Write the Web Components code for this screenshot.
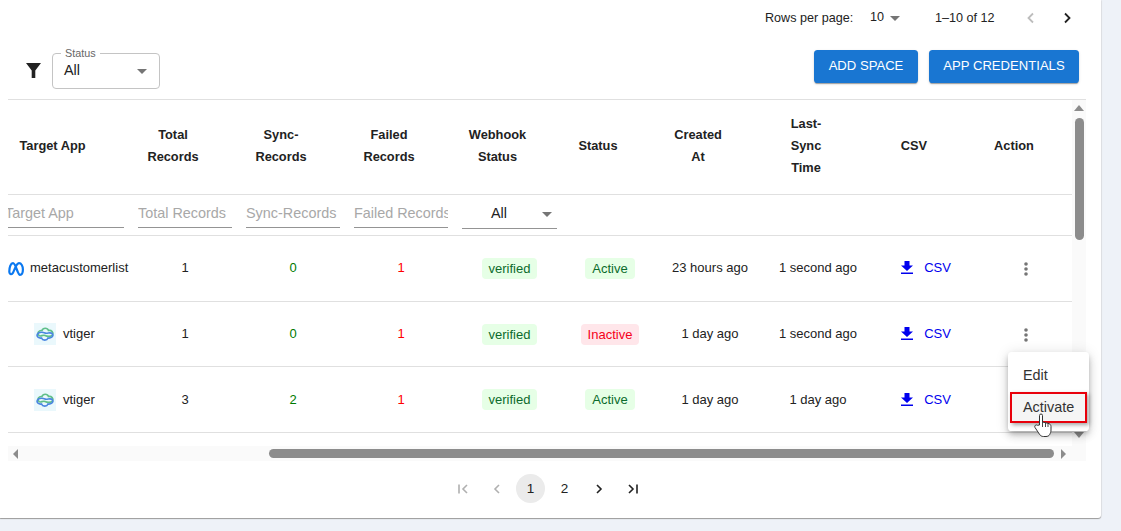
<!DOCTYPE html>
<html>
<head>
<meta charset="utf-8">
<style>
  html, body { margin: 0; height: 100%; }
  body { background: #eef2f8; font-family: "Liberation Sans", Arial, sans-serif; color: #222; overflow: hidden; }
</style>
</head>
<body>
<spaces-page>
  <top-pager slot="pager"></top-pager>
  <spaces-toolbar slot="toolbar"></spaces-toolbar>
  <spaces-table slot="table"></spaces-table>
  <page-nav slot="nav"></page-nav>
</spaces-page>

<script>
const CARET = `<svg width="10" height="5" viewBox="0 0 10 5"><path d="M0 0h10L5 5z" fill="#757575"/></svg>`;

class SpacesPage extends HTMLElement {
  constructor() {
    super();
    this.attachShadow({mode: 'open'}).innerHTML = `
      <style>
        :host { display: flex; flex-direction: column; width: 1101px; height: 518px; background: #fff; box-shadow: 0 1px 1px #9a9a9a, 1px 0 1px #e4e6ea; border-radius: 0 0 3px 0; box-sizing: border-box; }
      </style>
      <slot name="pager"></slot>
      <slot name="toolbar"></slot>
      <slot name="table"></slot>
      <slot name="nav"></slot>`;
  }
}

class TopPager extends HTMLElement {
  constructor() {
    super();
    this.attachShadow({mode: 'open'}).innerHTML = `
      <style>
        :host { display: flex; align-items: center; height: 36px; padding-left: 765px; font-size: 12.6px; color: #222; box-sizing: border-box; }
        .rows { width: 105px; }
        .size { display: flex; align-items: center; width: 65px; }
        .size span { width: 20px; margin-top: -2px; }
        .range { width: 90px; }
        svg.chev { display: block; }
        .next { margin-left: 24px; }
      </style>
      <span class="rows">Rows per page:</span>
      <div class="size"><span>10</span>${CARET}</div>
      <span class="range">1–10 of 12</span>
      <svg class="chev" width="12" height="12" viewBox="0 0 12 12"><path d="M8 1.5 3.5 6 8 10.500" fill="none" stroke="#bdbdbd" stroke-width="1.800"/></svg>
      <svg class="chev next" width="12" height="12" viewBox="0 0 12 12"><path d="M4 1.500 8.500 6 4 10.500" fill="none" stroke="#222" stroke-width="1.800"/></svg>`;
  }
}

class SpacesToolbar extends HTMLElement {
  constructor() {
    super();
    this.attachShadow({mode: 'open'}).innerHTML = `
      <style>
        :host { display: flex; align-items: flex-start; height: 63px; padding: 14px 22px 0 26px; box-sizing: border-box; }
        .funnel { display: block; margin-top: 13px; margin-right: 11px; }
        .select { position: relative; display: flex; align-items: center; justify-content: space-between; width: 108px; height: 36px; margin-top: 3px; padding: 0 12px 0 11px; border: 1px solid #c4c4c4; border-radius: 4px; box-sizing: border-box; font-size: 14.4px; color: #222; }
        .select span { margin-bottom: 2px; }
        .select label { position: absolute; left: 8px; top: -7px; padding: 0 4px; background: #fff; font-size: 10.800px; line-height: 12px; color: #666; }
        .spacer { flex: 1; }
        button { height: 33px; padding: 0 0 3px; margin-left: 11px; border: 0; border-radius: 3.600px; background: #1976d2; color: #fff; font: 13.1px "Liberation Sans", Arial, sans-serif; box-shadow: 0 2px 1px -1px rgba(0,0,0,.2), 0 1px 1px rgba(0,0,0,.14), 0 1px 3px rgba(0,0,0,.12); }
        .add { width: 104px; }
        .creds { width: 150px; }
      </style>
      <svg class="funnel" width="15" height="15" viewBox="0 0 15 15"><path d="M0 0h15L9.300 7.400V15H5.700V7.400z" fill="#222"/></svg>
      <div class="select"><label>Status</label><span>All</span>${CARET}</div>
      <div class="spacer"></div>
      <button class="add">ADD SPACE</button>
      <button class="creds">APP CREDENTIALS</button>`;
  }
}

const COLS = '131px 108px 108px 108px 109px 92px 108px 108px 108px 92px';

const ROWS = [
  {app: 'metacustomerlist', meta: true, total: 1, sync: 0, failed: 1, on: true, created: '23 hours ago', last: '1 second ago'},
  {app: 'vtiger', total: 1, sync: 0, failed: 1, on: false, created: '1 day ago', last: '1 second ago'},
  {app: 'vtiger', total: 3, sync: 2, failed: 1, on: true, created: '1 day ago', last: '1 day ago'},
];

const META_ICON = `<svg width="16" height="14" viewBox="0 0 16 14"><path d="M1.300 9.500C1.300 5 2.800 1.200 5 1.200 7.800 1.200 9.500 12.800 12 12.800 14 12.800 14.900 10 14.900 7.500 14.900 3.800 13.200 1.200 11 1.200 8.300 1.200 6.500 8 5 10.800 4 12.800 1.500 13 1.300 9.500z" fill="none" stroke="#0a78f0" stroke-width="2.200"/></svg>`;

const TIGER_ICON = `<svg width="22" height="22" viewBox="0 0 22 22"><rect width="22" height="22" fill="#eaf8fc"/><path d="M5 12.500C2.500 10 5 7 8 7.500 9 4.500 13.500 4.500 14.500 7.500 17.500 7 20 9.500 18.500 12 17 14 13 13.500 11 12.500 9 11.500 6.500 14 5 12.500z" fill="none" stroke="#5fbf8a" stroke-width="1.600"/><path d="M3.500 11C5 8.500 9 9 11 10 13 11 17 8.500 18.500 11 20 13.500 16.500 15.500 14 15 13 17.800 8.500 17.800 7.500 15 5 15.500 2 13.500 3.500 11z" fill="none" stroke="#4a86e0" stroke-width="1.600"/></svg>`;

class StatusBadge extends HTMLElement {
  constructor() {
    super();
    this.attachShadow({mode: 'open'}).innerHTML = `
      <style>
        :host { display: inline-block; padding: 3px 7px; border-radius: 4px; font-size: 13px; line-height: 15px; background: #e6ffe6; color: #0c6b2c; }
        :host([tone="bad"]) { background: #ffe6ea; color: #f5001a; }
      </style><slot></slot>`;
  }
}

class SpacesTable extends HTMLElement {
  constructor() {
    super();
    const head = [['Target App'], ['Total', 'Records'], ['Sync-', 'Records'], ['Failed', 'Records'], ['Webhook', 'Status'], ['Status'], ['Created', 'At'], ['Last-', 'Sync', 'Time'], ['CSV'], ['Action']];
    const filters = ['Target App', 'Total Records', 'Sync-Records', 'Failed Records'];
    this.attachShadow({mode: 'open'}).innerHTML = `
      <style>
        :host { display: grid; grid-template-columns: 1064px 14px; grid-template-rows: 346px 15px; margin-left: 8px; width: 1078px; border-top: 1px solid #e0e0e0; box-sizing: border-box; height: 362px; position: relative; }
        .view { overflow: hidden; }
        .table { margin-left: -8px; width: 1072px; }
        .row { display: grid; grid-template-columns: ${COLS}; align-items: center; border-bottom: 1px solid #e0e0e0; box-sizing: border-box; color: #222; text-align: center; }
        .row.head { height: 95px; padding-bottom: 3px; font-weight: bold; font-size: 12.8px; line-height: 22px; }
        .row.head div { padding-right: 24px; }
        .row.head div:first-child { padding-right: 26px; }
        .row.filter { height: 41px; }
        .row.body { height: 66px; font-size: 13px; }
        .row.body:nth-child(4) { height: 65px; padding-top: 1px; }
        .row.body:nth-child(5) { padding-top: 2px; }
        .row.body > div { padding-bottom: 2px; }
        .row.body > .b { padding-bottom: 0; }
        .row.body:nth-child(5) > .b { padding-bottom: 2px; }
        input { display: block; width: 94px; margin: 0 7px; height: 22px; padding: 0 0 3px; border: 0; border-bottom: 1px solid #949494; outline: 0; font: 14.4px "Liberation Sans", Arial, sans-serif; box-sizing: content-box; background: none; }
        input::placeholder { color: #a8a8a8; opacity: 1; }
        .filter .first { width: 119px; margin-left: 5px; }
        .pick { display: flex; align-items: center; justify-content: space-between; width: 95px; margin: 0 7px; height: 26px; border-bottom: 1px solid #949494; box-sizing: content-box; font-size: 14.4px; }
        .pick span { margin-left: 29px; margin-bottom: 3px; }
        .pick svg { margin-right: 5px; }
        .app { display: flex; align-items: center; gap: 7px; padding-left: 34px; text-align: left; }
        .app.meta { padding-left: 8px; gap: 6px; }
        .app.meta svg { margin-top: 2px; }
        .sync { color: #007a00; }
        .failed { color: #ff0000; }
        .csv { display: flex; align-items: center; justify-content: center; gap: 11px; color: #0000ee; }
        .dots { display: block; margin: 0 auto; }
        .vbar { display: flex; flex-direction: column; align-items: center; background: #fafafa; }
        .hbar { grid-column: 1 / 3; display: flex; align-items: center; background: #fafafa; }
        .thumb { background: #8c8c8c; border-radius: 5px; }
        .vbar .thumb { width: 9px; height: 122px; margin-top: 7px; }
        .vbar svg { margin-top: 5px; }
        .vbar .down { margin-top: auto; margin-bottom: 8px; }
        .hbar .thumb { height: 9px; width: 785px; margin-left: 251px; }
        .hbar .l { margin-left: 5px; }
        .hbar .r { margin-left: 7px; }
        spaces-menu { position: absolute; left: 1000px; top: 252px; }
      </style>
      <div class="view">
        <div class="table">
          <div class="row head">${head.map(h => `<div>${h.join('<br>')}</div>`).join('')}</div>
          <div class="row filter">
            ${filters.map((f, i) => `<input class="${i ? '' : 'first'}" placeholder="${f}">`).join('')}
            <div class="pick"><span>All</span>${CARET}</div>
          </div>
          ${ROWS.map(r => `
            <div class="row body">
              <div class="app ${r.meta ? 'meta' : ''}">${r.meta ? META_ICON : TIGER_ICON}<span>${r.app}</span></div>
              <div>${r.total}</div>
              <div class="sync">${r.sync}</div>
              <div class="failed">${r.failed}</div>
              <div class="b"><status-badge>verified</status-badge></div>
              <div class="b"><status-badge tone="${r.on ? 'ok' : 'bad'}">${r.on ? 'Active' : 'Inactive'}</status-badge></div>
              <div>${r.created}</div>
              <div>${r.last}</div>
              <div class="csv"><svg width="12" height="13" viewBox="0 0 12 13"><path d="M3.500 0h5v4.500H12L6 10 0 4.500h3.500zM0 11.500h12V13H0z" fill="#0000ee"/></svg><span>CSV</span></div>
              <div class="b"><svg class="dots" width="4" height="14" viewBox="0 0 4 14"><g fill="#757575"><circle cx="2" cy="2" r="1.800"/><circle cx="2" cy="7" r="1.800"/><circle cx="2" cy="12" r="1.800"/></g></svg></div>
            </div>`).join('')}
        </div>
      </div>
      <div class="vbar">
        <svg width="10" height="6" viewBox="0 0 10 6"><path d="M0 6 5 0l5 6z" fill="#8c8c8c"/></svg>
        <div class="thumb"></div>
        <svg class="down" width="10" height="6" viewBox="0 0 10 6"><path d="M0 0l5 6 5-6z" fill="#8c8c8c"/></svg>
      </div>
      <div class="hbar">
        <svg class="l" width="5" height="10" viewBox="0 0 5 10"><path d="M5 0 0 5l5 5z" fill="#8c8c8c"/></svg>
        <div class="thumb"></div>
        <svg class="r" width="5" height="10" viewBox="0 0 5 10"><path d="M0 0l5 5-5 5z" fill="#8c8c8c"/></svg>
      </div>
      <spaces-menu></spaces-menu>`;
  }
}

class SpacesMenu extends HTMLElement {
  constructor() {
    super();
    this.attachShadow({mode: 'open'}).innerHTML = `
      <style>
        :host { display: block; width: 81px; height: 79px; padding-top: 8px; box-sizing: border-box; background: #fff; border-radius: 3.600px; font-size: 14.4px; color: #333; box-shadow: 0 3px 5px -1px rgba(0,0,0,.2), 0 5px 8px rgba(0,0,0,.14), 0 1px 14px rgba(0,0,0,.12); }
        .item { height: 31px; line-height: 30px; padding-left: 15px; }
        .active { position: relative; background: #f5f5f5; outline: 2.500px solid #e8000b; outline-offset: -2.500px; margin: 1px 2px 0 1.500px; padding-left: 13.500px; box-shadow: 2px 2px 4px rgba(0,0,0,.35); }
        .hand { position: absolute; left: 24px; top: 21px; }
      </style>
      <div class="item">Edit</div>
      <div class="item active">Activate
        <svg class="hand" width="18" height="24" viewBox="0 0 18 24"><path d="M5.500 12V2.500a1.500 1.500 0 0 1 3 0V9l5.500 1.300c1.800.4 3 1.500 3 3.200v3.500c0 2-.6 3-1.300 4.500-.7 1.300-2 2-3.700 2H9.500c-1.800 0-3-.8-4-2.200L1 14.500c-1-1.700 1-3.400 2.400-2.200z" fill="#fff" stroke="#333" stroke-width="1"/><path d="M8.500 9v5M11.500 10v4M14 10.500v3.500" stroke="#333" stroke-width=".9"/></svg>
      </div>`;
  }
}

class PageNav extends HTMLElement {
  constructor() {
    super();
    const chev = (d, c) => `<svg width="14" height="14" viewBox="0 0 14 14"><path d="${d}" fill="none" stroke="${c}" stroke-width="1.600"/></svg>`;
    this.attachShadow({mode: 'open'}).innerHTML = `
      <style>
        :host { display: flex; justify-content: center; align-items: center; gap: 5px; height: 29px; margin-top: 13px; padding-right: 6px; font-size: 13.5px; color: #222; }
        div { display: flex; align-items: center; justify-content: center; width: 29px; height: 29px; border-radius: 50%; }
        .on { background: #ebebeb; }
      </style>
      <div>${chev('M3 2.500v9M11 3 7 7l4 4', '#b0b0b0')}</div>
      <div>${chev('M9 3 5 7l4 4', '#b0b0b0')}</div>
      <div class="on">1</div>
      <div>2</div>
      <div>${chev('M5 3l4 4-4 4', '#222')}</div>
      <div>${chev('M3 3l4 4-4 4M11 2.500v9', '#222')}</div>`;
  }
}

customElements.define('status-badge', StatusBadge);
customElements.define('spaces-menu', SpacesMenu);
customElements.define('top-pager', TopPager);
customElements.define('spaces-toolbar', SpacesToolbar);
customElements.define('spaces-table', SpacesTable);
customElements.define('page-nav', PageNav);
customElements.define('spaces-page', SpacesPage);
</script>
</body>
</html>
